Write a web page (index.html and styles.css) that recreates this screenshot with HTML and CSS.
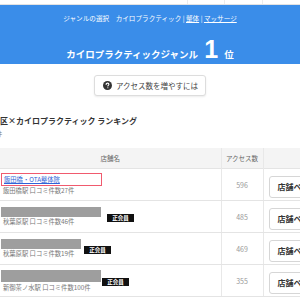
FILE: index.html
```html
<!DOCTYPE html>
<html lang="ja">
<head>
  <meta charset="UTF-8" />
  <title>カイロプラクティック ランキング</title>
  <link rel="stylesheet" href="styles.css">
</head>
<body>

<div class="top-strip">
  <span class="strip-cell wide"></span>
  <span class="strip-cell"></span>
  <span class="strip-cell"></span>
  <span class="strip-cell"></span>
</div>

<!-- Genre band -->
<header class="genre-band">
  <p class="genre-nav">ジャンルの選択　カイロプラクティック | <a href="#">整体</a> | <a href="#">マッサージ</a></p>
  <p class="genre-rank">カイロプラクティックジャンル <span class="rank-num">1</span> 位</p>
</header>

<div class="access-tip">
  <button class="tip-button">
    <svg class="tip-icon" viewBox="0 0 16 16" width="9" height="9">
      <circle cx="8" cy="8" r="8" fill="#333"/>
      <path d="M5.6 6.1c0-1.4 1.1-2.3 2.5-2.3s2.4.9 2.4 2.1c0 1.6-1.9 1.8-1.9 3.1" fill="none" stroke="#fff" stroke-width="1.9" stroke-linecap="round"/>
      <circle cx="8.6" cy="12" r="1.1" fill="#fff"/>
    </svg>
    アクセス数を増やすには
  </button>
</div>

<h2 class="ranking-title">区×カイロプラクティック ランキング</h2>
<p class="ranking-count">4件</p>

<table class="ranking-table">
  <colgroup>
    <col class="col-name">
    <col class="col-access">
    <col class="col-action">
  </colgroup>
  <thead>
    <tr>
      <th>店舗名</th>
      <th>アクセス数</th>
      <th></th>
    </tr>
  </thead>
  <tbody>
    <tr>
      <td class="name-cell">
        <a href="#" class="shop-link">飯田橋・OTA整体院</a>
        <div class="shop-meta">飯田橋駅 口コミ件数27件</div>
      </td>
      <td class="access-cell">596</td>
      <td><button class="page-button">店舗ページ</button></td>
    </tr>
    <tr>
      <td class="name-cell">
        <div class="member-row">
          <div>
            <div class="hidden-name" style="width: 100px;"></div>
            <div class="shop-meta">秋葉原駅 口コミ件数46件</div>
          </div>
          <span class="member-badge gap-wide">正会員</span>
        </div>
      </td>
      <td class="access-cell">485</td>
      <td><button class="page-button">店舗ページ</button></td>
    </tr>
    <tr>
      <td class="name-cell">
        <div class="member-row">
          <div>
            <div class="hidden-name" style="width: 80px;"></div>
            <div class="shop-meta">秋葉原駅 口コミ件数19件</div>
          </div>
          <span class="member-badge">正会員</span>
        </div>
      </td>
      <td class="access-cell">469</td>
      <td><button class="page-button">店舗ページ</button></td>
    </tr>
    <tr>
      <td class="name-cell">
        <div class="member-row">
          <div>
            <div class="hidden-name tall" style="width: 100px;"></div>
            <div class="shop-meta">新御茶ノ水駅 口コミ件数100件</div>
          </div>
          <span class="member-badge gap-none">正会員</span>
        </div>
      </td>
      <td class="access-cell">355</td>
      <td><button class="page-button">店舗ページ</button></td>
    </tr>
  </tbody>
</table>

</body>
</html>
```

FILE: styles.css
```css
body {
  margin: 0;
  background: #fff;
  color: #333;
  font-family: "Noto Sans CJK JP", "Liberation Sans", sans-serif;
  overflow: hidden;
}

p {
  margin: 0;
}

/* Leftover row of the table above */
.top-strip {
  display: flex;
  height: 4px;
  border-bottom: 1px solid #e2e2e2;
}

.strip-cell {
  width: 40px;
  border-left: 1px solid #ececec;
}

.strip-cell.wide {
  width: 203px;
  border-left: none;
}

/* Genre band */
.genre-band {
  background: #3a8de9;
  color: #fff;
  text-align: center;
  padding-top: 9px;
  height: 59px;
  box-sizing: border-box;
}

.genre-nav {
  font-size: 6.6px;
  line-height: 9px;
  margin-bottom: 11px;
}

.genre-nav a {
  color: #fff;
}

.genre-rank {
  font-size: 9.5px;
  font-weight: bold;
  line-height: 30px;
}

.rank-num {
  font-family: "Liberation Sans", Arial, sans-serif;
  font-size: 25px;
  margin: 0 4px;
}

/* Access tip button */
.access-tip {
  display: flex;
  justify-content: center;
  margin-top: 11px;
}

.tip-button {
  display: flex;
  align-items: center;
  gap: 4px;
  height: 21px;
  padding: 0 7px 0 8px;
  background: #fff;
  border: 1px solid #ddd;
  border-radius: 3px;
  box-shadow: 0 1px 2px rgba(0, 0, 0, 0.08);
  font-family: inherit;
  font-size: 7.5px;
  color: #444;
}

/* Ranking heading */
.ranking-title {
  margin: 20px 0 0 0;
  font-size: 8px;
  line-height: 10px;
  color: #333;
}

.ranking-count {
  margin: 4px 0 0 -7px;
  font-size: 6px;
  line-height: 8px;
  color: #777;
}

/* Ranking table */
.ranking-table {
  margin-top: 10px;
  width: 340px;
  table-layout: fixed;
  border-collapse: collapse;
}

.col-name {
  width: 221px;
}

.col-access {
  width: 42px;
}

.col-action {
  width: 77px;
}

.ranking-table th {
  height: 20px;
  padding: 0;
  background: #f4f4f4;
  font-size: 6.5px;
  font-weight: normal;
  color: #666;
  border-left: 1px solid #e8e8e8;
}

.ranking-table th:first-child,
.ranking-table td:first-child {
  border-left: none;
}

.ranking-table td {
  height: 31px;
  padding: 0;
  border-top: 1px solid #e4e4e4;
  border-bottom: 1px solid #e4e4e4;
  border-left: 1px solid #e8e8e8;
  vertical-align: middle;
}

.name-cell {
  padding-left: 1px !important;
}

.shop-link {
  display: block;
  width: 95px;
  margin-top: -1px;
  padding: 1px 2px;
  border: 1px solid #f05a6e;
  color: #2f63d6;
  font-size: 6.3px;
  line-height: 9px;
}

.shop-meta {
  padding-left: 2px;
  margin-top: 1px;
  font-size: 6.3px;
  line-height: 8px;
  color: #777;
}

.member-row {
  display: flex;
  align-items: center;
  gap: 3px;
}

.hidden-name {
  height: 10px;
  background: #9e9e9e;
}

.hidden-name.tall {
  height: 12px;
  margin-bottom: 2px;
}

.member-badge {
  display: inline-block;
  width: 27px;
  height: 8px;
  margin-top: 2px;
  background: #111;
  color: #fff;
  font-size: 5.5px;
  font-weight: bold;
  line-height: 8px;
  text-align: center;
}

.member-badge.gap-wide {
  margin-left: 3px;
}

.member-badge.gap-none {
  margin-left: -2px;
}

.access-cell {
  text-align: center;
  font-size: 7px;
  color: #999;
}

.page-button {
  margin-left: 5px;
  height: 22px;
  width: 70px;
  padding: 0 0 0 8px;
  text-align: left;
  background: #fff;
  border: 1px solid #d6d6d6;
  border-radius: 3px;
  font-family: inherit;
  font-size: 8px;
  font-weight: bold;
  color: #333;
}
```
